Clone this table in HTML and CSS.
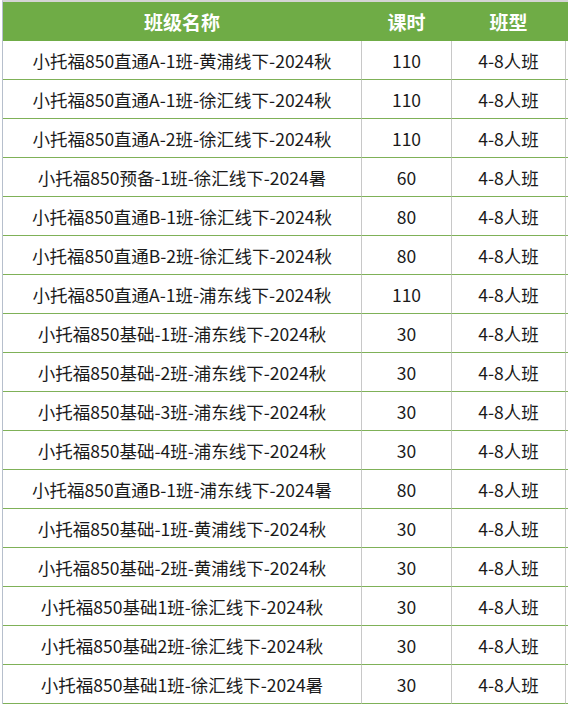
FILE: index.html
```html
<!DOCTYPE html>
<html lang="zh-CN">
<head>
<meta charset="utf-8">
<title>班级列表</title>
<link rel="stylesheet" href="styles.css">
</head>
<body>
<table class="sheet">
  <thead>
    <tr>
      <th class="c1">班级名称</th>
      <th class="c2">课时</th>
      <th class="c3">班型</th>
      <th class="c4"></th>
    </tr>
  </thead>
  <tbody>
    <tr><td class="c1">小托福850直通A-1班-黄浦线下-2024秋</td><td class="c2">110</td><td class="c3">4-8人班</td><td class="c4"></td></tr>
    <tr><td class="c1">小托福850直通A-1班-徐汇线下-2024秋</td><td class="c2">110</td><td class="c3">4-8人班</td><td class="c4"></td></tr>
    <tr><td class="c1">小托福850直通A-2班-徐汇线下-2024秋</td><td class="c2">110</td><td class="c3">4-8人班</td><td class="c4"></td></tr>
    <tr><td class="c1">小托福850预备-1班-徐汇线下-2024暑</td><td class="c2">60</td><td class="c3">4-8人班</td><td class="c4"></td></tr>
    <tr><td class="c1">小托福850直通B-1班-徐汇线下-2024秋</td><td class="c2">80</td><td class="c3">4-8人班</td><td class="c4"></td></tr>
    <tr><td class="c1">小托福850直通B-2班-徐汇线下-2024秋</td><td class="c2">80</td><td class="c3">4-8人班</td><td class="c4"></td></tr>
    <tr><td class="c1">小托福850直通A-1班-浦东线下-2024秋</td><td class="c2">110</td><td class="c3">4-8人班</td><td class="c4"></td></tr>
    <tr><td class="c1">小托福850基础-1班-浦东线下-2024秋</td><td class="c2">30</td><td class="c3">4-8人班</td><td class="c4"></td></tr>
    <tr><td class="c1">小托福850基础-2班-浦东线下-2024秋</td><td class="c2">30</td><td class="c3">4-8人班</td><td class="c4"></td></tr>
    <tr><td class="c1">小托福850基础-3班-浦东线下-2024秋</td><td class="c2">30</td><td class="c3">4-8人班</td><td class="c4"></td></tr>
    <tr><td class="c1">小托福850基础-4班-浦东线下-2024秋</td><td class="c2">30</td><td class="c3">4-8人班</td><td class="c4"></td></tr>
    <tr><td class="c1">小托福850直通B-1班-浦东线下-2024暑</td><td class="c2">80</td><td class="c3">4-8人班</td><td class="c4"></td></tr>
    <tr><td class="c1">小托福850基础-1班-黄浦线下-2024秋</td><td class="c2">30</td><td class="c3">4-8人班</td><td class="c4"></td></tr>
    <tr><td class="c1">小托福850基础-2班-黄浦线下-2024秋</td><td class="c2">30</td><td class="c3">4-8人班</td><td class="c4"></td></tr>
    <tr><td class="c1">小托福850基础1班-徐汇线下-2024秋</td><td class="c2">30</td><td class="c3">4-8人班</td><td class="c4"></td></tr>
    <tr><td class="c1">小托福850基础2班-徐汇线下-2024秋</td><td class="c2">30</td><td class="c3">4-8人班</td><td class="c4"></td></tr>
    <tr><td class="c1">小托福850基础1班-徐汇线下-2024暑</td><td class="c2">30</td><td class="c3">4-8人班</td><td class="c4"></td></tr>
  </tbody>
</table>
</body>
</html>
```
FILE: styles.css
```css
html, body {
  margin: 0;
  padding: 0;
  background: #ffffff;
}
body {
  font-family: "Noto Sans CJK SC", "Noto Sans", sans-serif;
  color: #1a1a1a;
  overflow: hidden;
}
.sheet {
  margin: 0 0 0 2px;
  border-collapse: separate;
  border-spacing: 0;
  table-layout: fixed;
  width: 566px;
  border-top: 2px solid #d4d4d4;
  border-left: 1px solid #b6bfcc;
}
.sheet th,
.sheet td {
  box-sizing: border-box;
  padding: 0;
  text-align: center;
  vertical-align: middle;
  white-space: nowrap;
  overflow: hidden;
}
.sheet th {
  height: 39px;
  background: #6fac46;
  color: #ffffff;
  font-size: 19px;
  font-weight: 700;
  border-right: 1px solid #6fac46;
}
.sheet td {
  height: 39px;
  font-size: 17.5px;
  font-weight: 400;
  border-right: 1px solid #c8c8c8;
  border-bottom: 1px solid #7fb158;
}
.sheet .c1 { width: 359px; }
.sheet .c2 { width: 90px; }
.sheet .c3 { width: 114px; }
.sheet .c4 { width: 2px; }
.sheet td.c4 { border-right: none; }
.sheet th.c4 { border-right: none; }
```
